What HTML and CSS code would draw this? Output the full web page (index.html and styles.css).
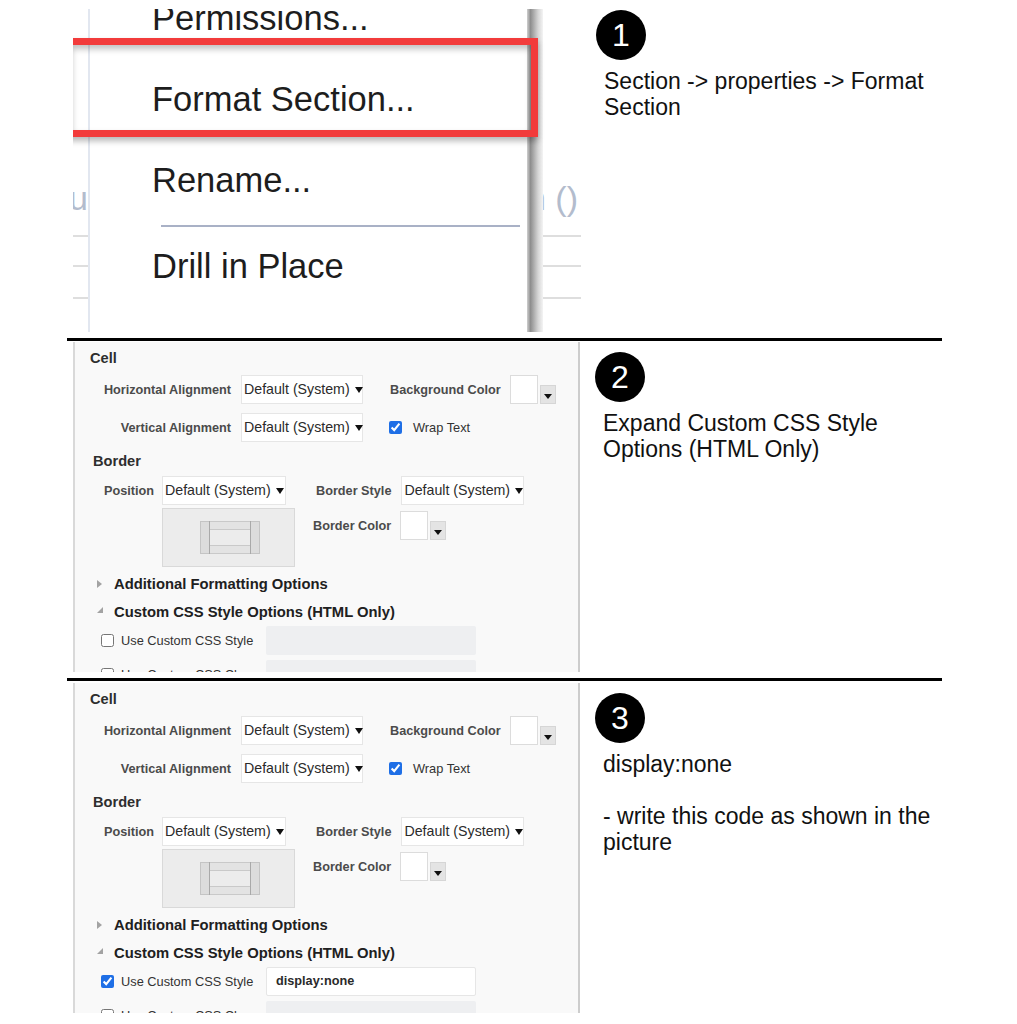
FILE: index.html
```html
<!DOCTYPE html>
<html>
<head>
<meta charset="utf-8">
<title>Hide a section with a custom CSS style</title>
<link rel="stylesheet" href="styles.css">
</head>
<body>
<div class="steps">

<!-- step 1 : context menu of the section -->
<div class="step step-one">
  <div class="shot menu-shot">
    <div class="strip strip-left">
      <div class="strip-text">nu</div>
      <div class="strip-row"></div>
      <div class="strip-row strip-row-tall"></div>
    </div>
    <div class="menu">
      <div class="menu-list">
        <div class="menu-item">Permissions...</div>
        <div class="menu-item">Format Section...</div>
        <div class="menu-item">Rename...</div>
        <div class="menu-sep"></div>
        <div class="menu-item">Drill in Place</div>
      </div>
    </div>
    <div class="strip strip-right">
      <div class="strip-text">n ()</div>
      <div class="strip-row"></div>
      <div class="strip-row strip-row-tall"></div>
    </div>
    <div class="highlight"></div>
  </div>
  <div class="note">
    <div class="badge">1</div>
    <p>Section -&gt; properties -&gt; Format Section</p>
  </div>
</div>

<!-- step 2 : format dialog, css options still empty -->
<div class="step step-two">
  <div class="shot panel">
    <div class="group-title">Cell</div>
    <div class="form-row row-first">
      <span class="lbl lbl-cell">Horizontal Alignment</span>
      <span class="select select-cell">Default (System)<i class="caret"></i></span>
      <span class="side">
        <span class="lbl">Background Color</span>
        <span class="color-pick"><span class="swatch"></span><span class="swatch-btn"><i class="caret"></i></span></span>
      </span>
    </div>
    <div class="form-row row-second">
      <span class="lbl lbl-cell">Vertical Alignment</span>
      <span class="select select-cell">Default (System)<i class="caret"></i></span>
      <label class="check check-wrap"><input type="checkbox" checked> Wrap Text</label>
    </div>
    <div class="group-title border-title">Border</div>
    <div class="form-row row-border">
      <span class="lbl lbl-pos">Position</span>
      <span class="select select-pos">Default (System)<i class="caret"></i></span>
      <span class="lbl lbl-style">Border Style</span>
      <span class="select select-style">Default (System)<i class="caret"></i></span>
    </div>
    <div class="preview-row">
      <div class="preview">
        <svg width="60" height="34" viewBox="0 0 60 34">
          <rect x="9.5" y="0.5" width="41" height="8" fill="#e3e3e3" stroke="#c9c9c9"/>
          <rect x="9.5" y="24.5" width="41" height="8" fill="#e3e3e3" stroke="#c9c9c9"/>
          <rect x="0.5" y="0.5" width="9" height="32" fill="#dcdcdc" stroke="#c4c4c4"/>
          <rect x="50.5" y="0.5" width="9" height="32" fill="#dcdcdc" stroke="#c4c4c4"/>
          <line x1="9.5" y1="0" x2="9.5" y2="33" stroke="#a9a9a9"/>
          <line x1="50.5" y1="0" x2="50.5" y2="33" stroke="#a9a9a9"/>
        </svg>
      </div>
      <span class="side side-color">
        <span class="lbl">Border Color</span>
        <span class="color-pick"><span class="swatch"></span><span class="swatch-btn"><i class="caret"></i></span></span>
      </span>
    </div>
    <div class="expander closed">Additional Formatting Options</div>
    <div class="expander open">Custom CSS Style Options (HTML Only)</div>
    <div class="css-row">
      <label class="check check-css"><input type="checkbox"> Use Custom CSS Style</label>
      <span class="css-input"></span>
    </div>
    <div class="css-row css-row-next">
      <label class="check check-css"><input type="checkbox"> Use Custom CSS Class</label>
      <span class="css-input"></span>
    </div>
  </div>
  <div class="note">
    <div class="badge">2</div>
    <p>Expand Custom CSS Style Options (HTML Only)</p>
  </div>
</div>

<!-- step 3 : same dialog, style filled in -->
<div class="step step-three">
  <div class="shot panel">
    <div class="group-title">Cell</div>
    <div class="form-row row-first">
      <span class="lbl lbl-cell">Horizontal Alignment</span>
      <span class="select select-cell">Default (System)<i class="caret"></i></span>
      <span class="side">
        <span class="lbl">Background Color</span>
        <span class="color-pick"><span class="swatch"></span><span class="swatch-btn"><i class="caret"></i></span></span>
      </span>
    </div>
    <div class="form-row row-second">
      <span class="lbl lbl-cell">Vertical Alignment</span>
      <span class="select select-cell">Default (System)<i class="caret"></i></span>
      <label class="check check-wrap"><input type="checkbox" checked> Wrap Text</label>
    </div>
    <div class="group-title border-title">Border</div>
    <div class="form-row row-border">
      <span class="lbl lbl-pos">Position</span>
      <span class="select select-pos">Default (System)<i class="caret"></i></span>
      <span class="lbl lbl-style">Border Style</span>
      <span class="select select-style">Default (System)<i class="caret"></i></span>
    </div>
    <div class="preview-row">
      <div class="preview">
        <svg width="60" height="34" viewBox="0 0 60 34">
          <rect x="9.5" y="0.5" width="41" height="8" fill="#e3e3e3" stroke="#c9c9c9"/>
          <rect x="9.5" y="24.5" width="41" height="8" fill="#e3e3e3" stroke="#c9c9c9"/>
          <rect x="0.5" y="0.5" width="9" height="32" fill="#dcdcdc" stroke="#c4c4c4"/>
          <rect x="50.5" y="0.5" width="9" height="32" fill="#dcdcdc" stroke="#c4c4c4"/>
          <line x1="9.5" y1="0" x2="9.5" y2="33" stroke="#a9a9a9"/>
          <line x1="50.5" y1="0" x2="50.5" y2="33" stroke="#a9a9a9"/>
        </svg>
      </div>
      <span class="side side-color">
        <span class="lbl">Border Color</span>
        <span class="color-pick"><span class="swatch"></span><span class="swatch-btn"><i class="caret"></i></span></span>
      </span>
    </div>
    <div class="expander closed">Additional Formatting Options</div>
    <div class="expander open">Custom CSS Style Options (HTML Only)</div>
    <div class="css-row">
      <label class="check check-css"><input type="checkbox" checked> Use Custom CSS Style</label>
      <span class="css-input filled">display:none</span>
    </div>
    <div class="css-row css-row-next">
      <label class="check check-css"><input type="checkbox"> Use Custom CSS Class</label>
      <span class="css-input"></span>
    </div>
  </div>
  <div class="note">
    <div class="badge">3</div>
    <p>display:none</p>
    <p>- write this code as shown in the picture</p>
  </div>
</div>

</div>
</body>
</html>
```

FILE: styles.css
```css
body { margin:0; background:#fff; color:#111; font-family:"Liberation Sans", Arial, Helvetica, sans-serif; }

.steps { margin-left:67px; width:875px; }
.step { display:flex; align-items:flex-start; padding-left:6px; border-bottom:3px solid #000; overflow:hidden; }
.step-one { height:338px; }
.step-two { height:337px; }
.step-three { height:343px; border-bottom:none; }
.shot { flex-shrink:0; }

/* right hand notes */
.note { flex:1; padding:10px 0 0 15px; }
.step-two .note { padding-top:11px; }
.step-three .note { padding-top:12px; }
.badge { width:50px; height:50px; border-radius:50%; background:#000; color:#fff; font-size:32px; display:flex; align-items:center; justify-content:center; }
.note p { margin:8px 0 0 8px; font-size:23px; line-height:26px; color:#111; }
.note p + p { margin-top:26px; }

/* step 1 : menu screenshot */
.menu-shot { display:flex; width:508px; height:323px; margin-top:9px; background:#fff; position:relative; overflow:hidden; }
.strip { overflow:hidden; }
.strip-left { width:15px; border-right:2px solid #e2e7f0; }
.strip-right { flex:1; }
.strip-text { height:228px; box-sizing:border-box; padding-top:169px; font-size:34px; line-height:40px; color:#b3bccd; white-space:nowrap; border-bottom:2px solid #dedede; }
.strip-left .strip-text { text-align:right; direction:rtl; }
.strip-row { height:28px; border-bottom:2px solid #dedede; }
.strip-row-tall { height:30px; }
.menu { width:437px; position:relative; }
.menu::after { content:""; position:absolute; top:0; bottom:0; right:-16px; width:16px; z-index:1;
  background:linear-gradient(to right, #cfcfcf 0, #8e8e8e 22%, #a9a9a9 40%, #d6d6d6 70%, #f4f4f4 100%); }
.menu-list { margin-top:-31px; padding-left:62px; }
.menu-item { font-size:34.5px; line-height:40px; padding:20px 0 21px; color:#1d1d1d; white-space:nowrap; }
.menu-sep { margin:4px 0 0 9px; width:359px; height:2px; background:#a9b1c6; }
.menu-sep + .menu-item { padding-top:19px; }
.highlight { position:absolute; left:-8px; top:29px; width:473px; height:99px; box-sizing:border-box; border:7px solid #f23b3b; z-index:2;
  box-shadow:0 4px 6px rgba(0,0,0,.28), inset 0 4px 6px rgba(0,0,0,.25); }

/* steps 2 and 3 : format dialog */
.panel { width:507px; height:330px; margin-top:1px; padding-top:7px; box-sizing:border-box; background:#f9f9f9; border-left:2px solid #d9d9d9; border-right:2px solid #cdcdcd; overflow:hidden; }
.step-three .panel { margin-top:2px; }
.group-title { padding-left:15px; font-size:14.6px; font-weight:bold; line-height:18px; color:#2e2e2e; }
.border-title { padding-left:18px; margin-top:10px; }
.form-row { display:flex; align-items:center; height:29px; }
.row-first { margin-top:8px; }
.row-second { margin-top:9px; }
.row-border { margin-top:6px; }
.lbl { font-size:12.7px; font-weight:bold; color:#4b4b4b; white-space:nowrap; }
.lbl-cell { width:156px; text-align:right; margin-right:10px; }
.lbl-pos { width:79px; text-align:right; margin-right:8px; }
.lbl-style { margin:0 10px 0 30px; }
.select { box-sizing:border-box; height:29px; padding-left:2px; background:#fff; border:1px solid #e6e6e6; font-size:14.2px; line-height:27px; color:#2b2b2b; white-space:nowrap; }
.select-cell { width:122px; }
.select-pos { width:124px; }
.select-style { width:123px; }
.caret { display:inline-block; vertical-align:middle; margin:0 0 0 5px; border-left:4.5px solid transparent; border-right:4.5px solid transparent; border-top:6px solid #111; }
.side { display:flex; align-items:center; margin-left:27px; }
.side .lbl { margin-right:9px; }
.color-pick { display:flex; align-items:flex-end; gap:2px; }
.swatch { width:28px; height:29px; box-sizing:border-box; background:#fff; border:1px solid #dcdcdc; }
.swatch-btn { width:16px; height:19px; box-sizing:border-box; background:#e4e4e4; border:1px solid #d6d6d6; display:flex; align-items:center; justify-content:center; }
.swatch-btn .caret { margin:3px 0 0; border-left-width:4px; border-right-width:4px; border-top-width:5px; }
.check { display:flex; align-items:center; font-size:12.8px; color:#333; white-space:nowrap; }
.check input { margin:0; width:13px; height:13px; accent-color:#1f6fe6; }
.check-wrap { margin-left:26px; gap:11px; }
.preview-row { display:flex; align-items:flex-start; margin-top:3px; }
.preview { width:133px; height:59px; margin-left:87px; box-sizing:border-box; padding:12px 0 0 37px; background:#ececec; border:1px solid #d9d9d9; }
.preview svg { display:block; }
.side-color { margin:3px 0 0 18px; }
.expander { display:flex; align-items:center; height:28px; padding-left:22px; font-size:14.8px; font-weight:bold; color:#202020; white-space:nowrap; }
.closed { margin-top:3px; }
.closed::before { content:""; margin-right:12px; border-left:5px solid #a3a3a3; border-top:4px solid transparent; border-bottom:4px solid transparent; }
.open::before { content:""; margin:0 11px 0 0; position:relative; top:-2px; border-bottom:6px solid #a3a3a3; border-left:6px solid transparent; }
.css-row { display:flex; align-items:center; height:29px; padding-left:26px; }
.css-row-next { margin-top:5px; }
.check-css { width:165px; gap:7px; }
.css-input { width:210px; height:29px; box-sizing:border-box; border-radius:2px; background:#eeeff1; }
.css-input.filled { background:#fff; border:1px solid #e6e6e6; padding-left:9px; font-size:12.7px; font-weight:bold; line-height:27px; color:#2a2a2a; }
```
